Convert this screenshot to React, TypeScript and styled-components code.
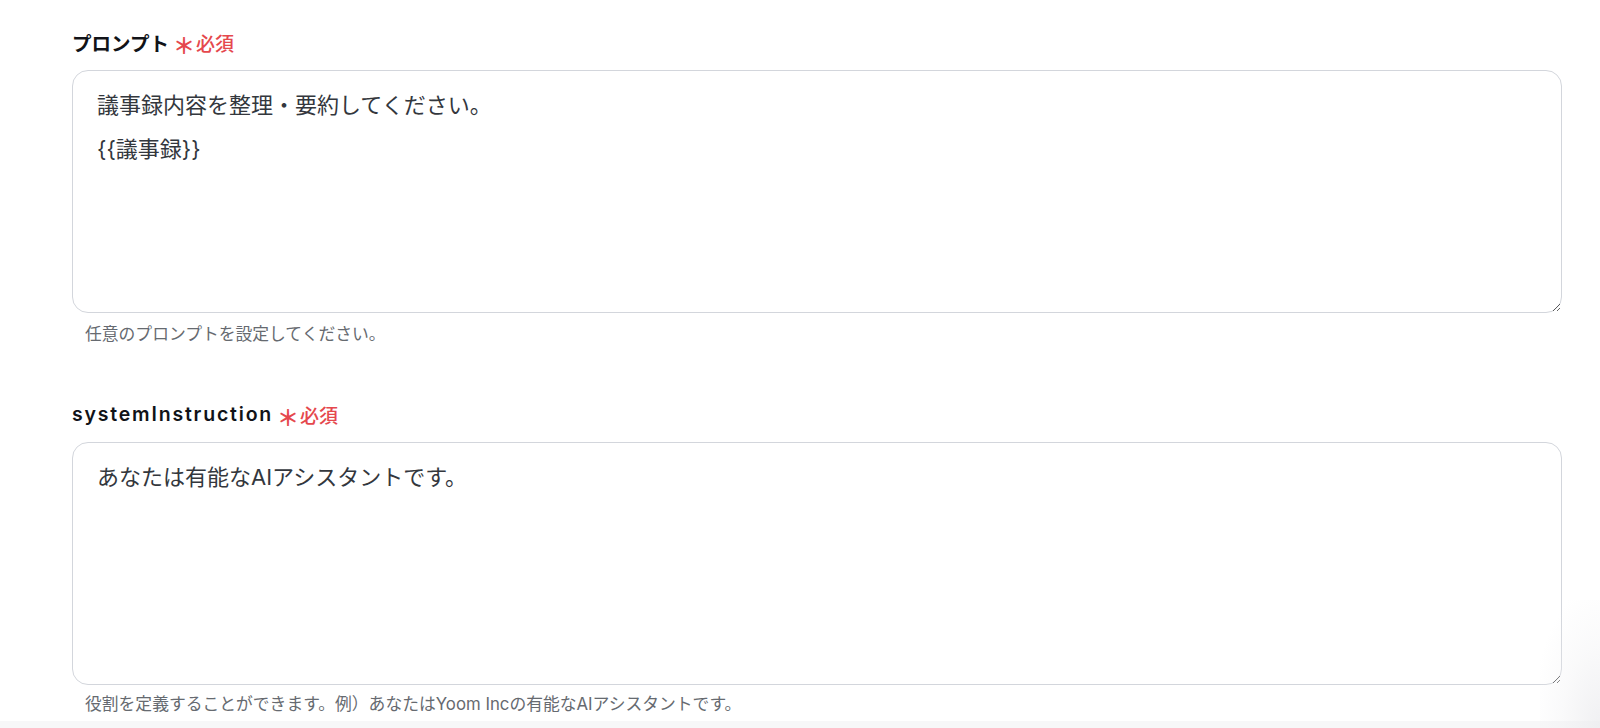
import React from "react";
import styled, { createGlobalStyle } from "styled-components";

const GlobalStyle = createGlobalStyle`
  html, body {
    margin: 0;
    padding: 0;
    background: #ffffff;
  }
  body {
    font-family: Inter, "Noto Sans CJK JP", "Noto Sans", sans-serif;
    -webkit-font-smoothing: antialiased;
  }
`;

const Page = styled.div`
  position: relative;
  width: 1600px;
  height: 728px;
  overflow: hidden;
  box-sizing: border-box;
  display: flex;
  flex-direction: column;
  background: #ffffff;
`;

const Content = styled.div`
  flex: 1;
  display: flex;
  flex-direction: column;
  padding: 28px 38px 0 72px;
`;

const Field = styled.section<{ $gapTop?: number }>`
  display: flex;
  flex-direction: column;
  margin-top: ${(p) => p.$gapTop ?? 0}px;
`;

const LabelRow = styled.div`
  display: flex;
  align-items: center;
  height: 28px;
  margin-bottom: 14px;
`;

const LabelText = styled.span<{ $tracking: number }>`
  font-family: Inter, "Noto Sans CJK JP", sans-serif;
  font-size: 19.5px;
  font-weight: 600;
  color: #111318;
  letter-spacing: ${(p) => p.$tracking}px;
`;

const Asterisk = styled.span`
  font-family: "Noto Sans CJK JP", sans-serif;
  font-size: 22px;
  font-weight: 700;
  color: #e5484d;
  margin-left: 4px;
  line-height: 1;
  transform: translateY(2px);
`;

const Required = styled.span`
  font-family: "Noto Sans CJK JP", sans-serif;
  font-size: 19px;
  font-weight: 500;
  color: #e5484d;
  margin-left: 1px;
`;

const TextArea = styled.textarea`
  box-sizing: border-box;
  width: 100%;
  height: 243px;
  border: 1.5px solid #d3d6dc;
  border-radius: 16px;
  padding: 12px 24px;
  font-family: Inter, "Noto Sans CJK JP", sans-serif;
  font-size: 22px;
  line-height: 44px;
  color: #33373d;
  background: #ffffff;
  outline: none;
  resize: vertical;
  margin: 0;
  display: block;
`;

const Hint = styled.p<{ $gap: number }>`
  margin: ${(p) => p.$gap}px 0 0 0;
  padding-left: 13px;
  font-family: Inter, "Noto Sans CJK JP", sans-serif;
  font-size: 16.8px;
  line-height: 22px;
  color: #666a70;
`;

const Footer = styled.div`
  height: 7px;
  background: #f7f7f8;
`;

const EdgeShade = styled.div`
  position: absolute;
  right: 0;
  top: 600px;
  width: 60px;
  height: 128px;
  background: radial-gradient(ellipse at 100% 100%, rgba(236, 236, 239, 0.8) 0%, rgba(240, 240, 242, 0.35) 45%, rgba(255, 255, 255, 0) 80%);
  pointer-events: none;
`;

type FieldProps = {
  label: string;
  tracking: number;
  value: string;
  hint: string;
  gapTop?: number;
  hintGap: number;
};

const FormField: React.FC<FieldProps> = ({ label, tracking, value, hint, gapTop, hintGap }) => (
  <Field $gapTop={gapTop}>
    <LabelRow>
      <LabelText $tracking={tracking}>{label}</LabelText>
      <Asterisk>＊</Asterisk>
      <Required>必須</Required>
    </LabelRow>
    <TextArea readOnly defaultValue={value} />
    <Hint $gap={hintGap}>{hint}</Hint>
  </Field>
);

export default function App() {
  return (
    <>
      <GlobalStyle />
      <Page>
        <Content>
          <FormField
            label="プロンプト"
            tracking={0}
            value={"議事録内容を整理・要約してください。\n{{議事録}}"}
            hint="任意のプロンプトを設定してください。"
            hintGap={10}
          />
          <FormField
            label="systemInstruction"
            tracking={1.8}
            value="あなたは有能なAIアシスタントです。"
            hint="役割を定義することができます。例）あなたはYoom Incの有能なAIアシスタントです。"
            gapTop={55}
            hintGap={8}
          />
        </Content>
        <Footer />
        <EdgeShade />
      </Page>
    </>
  );
}
